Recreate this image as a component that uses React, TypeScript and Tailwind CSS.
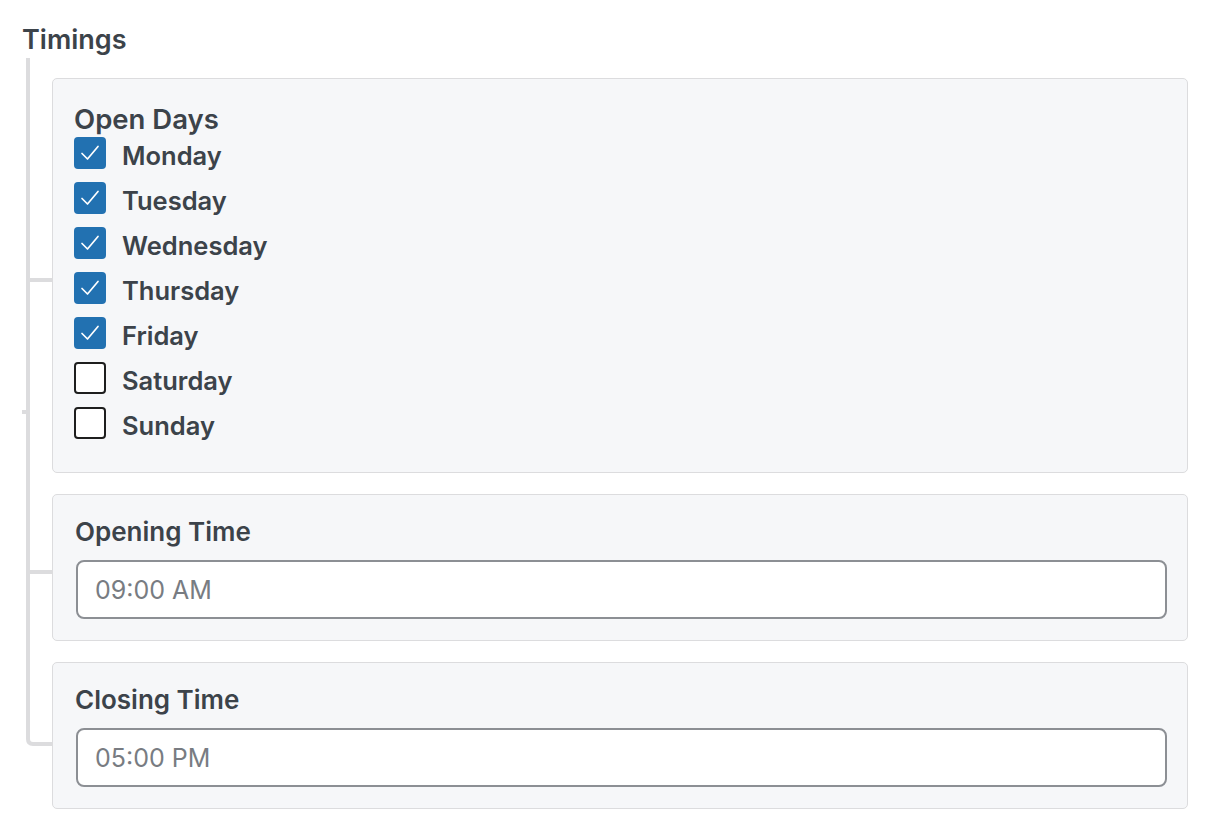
const days = [
  { name: 'Monday', checked: true },
  { name: 'Tuesday', checked: true },
  { name: 'Wednesday', checked: true },
  { name: 'Thursday', checked: true },
  { name: 'Friday', checked: true },
  { name: 'Saturday', checked: false },
  { name: 'Sunday', checked: false },
];

function Checkbox({ checked }: { checked: boolean }) {
  if (checked) {
    return (
      <span className="flex h-[32px] w-[32px] shrink-0 items-center justify-center rounded-[4px] bg-[#2271b1]">
        <svg width="32" height="32" viewBox="0 0 32 32" fill="none">
          <path d="M8 16.5 L13.5 22 L24 9.5" stroke="#ffffff" strokeWidth="1.7" strokeLinecap="round" strokeLinejoin="round" />
        </svg>
      </span>
    );
  }
  return <span className="h-[32px] w-[32px] shrink-0 rounded-[4px] border-2 border-[#1e1e1e] bg-white" />;
}

function TimeField({ label, value }: { label: string; value: string }) {
  return (
    <div className="rounded-[5px] border border-[#dcdcde] bg-[#f6f7f9] pl-[22px] pr-[20px] pt-[19px] pb-[21px]">
      <div className="text-[26px] leading-[36px] font-semibold text-[#3c434a]">{label}</div>
      <input
        readOnly
        placeholder={value}
        className="mt-[10px] ml-[1px] block h-[59px] w-[calc(100%-1px)] rounded-[8px] border-2 border-[#8c8f94] bg-white px-[17px] text-[25px] text-[#3c434a] outline-none placeholder:text-[#787c82]"
      />
    </div>
  );
}

export default function App() {
  return (
    <div className="min-h-screen bg-white pl-[22px] pt-[24px] font-['Inter','Noto_Sans',sans-serif] text-[#3c434a]">
      <div className="text-[27px] leading-[31px] font-semibold">Timings</div>
      <div className="mt-[3px] flex">
        {/* tree connector */}
        <svg width="30" height="690" viewBox="0 0 30 690" className="shrink-0" fill="none">
          <path d="M6 0 V681 Q6 686 11 686 H30" stroke="#dcdcde" strokeWidth="4" />
          <path d="M6 222 H30" stroke="#dcdcde" strokeWidth="4" />
          <path d="M6 514 H30" stroke="#dcdcde" strokeWidth="4" />
          <rect x="0" y="352" width="4" height="4" fill="#dcdcde" />
        </svg>

        <div className="flex w-[1136px] flex-col gap-[21px] pt-[20px]">
          {/* Open Days */}
          <div className="rounded-[5px] border border-[#dcdcde] bg-[#f6f7f9] pl-[21px] pr-[20px] pt-[22px] pb-[20px]">
            <div className="h-[36px] text-[27.5px] leading-[36px] font-semibold">Open Days</div>
            <div className="flex flex-col">
              {days.map((d) => (
                <label key={d.name} className="flex h-[45px] items-start gap-[16px]">
                  <Checkbox checked={d.checked} />
                  <span className="pt-[3px] text-[25.5px] leading-[32px] font-semibold">{d.name}</span>
                </label>
              ))}
            </div>
          </div>

          <TimeField label="Opening Time" value="09:00 AM" />
          <TimeField label="Closing Time" value="05:00 PM" />
        </div>
      </div>
    </div>
  );
}
